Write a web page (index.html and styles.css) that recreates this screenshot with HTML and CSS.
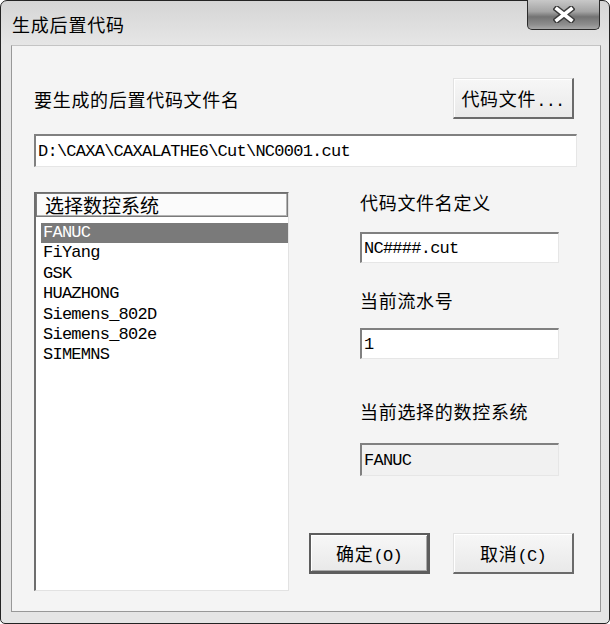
FILE: index.html
```html
<!DOCTYPE html>
<html lang="zh-CN">
<head>
<meta charset="utf-8">
<title>生成后置代码</title>
<link rel="stylesheet" href="styles.css">
</head>
<body>
<div class="window">
  <div class="titlebar">
    <span class="title">生成后置代码</span>
    <div class="close">
      <svg width="22" height="17" viewBox="0 0 22 17">
        <path d="M4 3 L18 14 M18 3 L4 14" stroke="#3c3c3c" stroke-width="6.5" stroke-linecap="square"/>
        <path d="M4 3 L18 14 M18 3 L4 14" stroke="#ffffff" stroke-width="3.6" stroke-linecap="square"/>
      </svg>
    </div>
  </div>
  <div class="client">
    <div class="row-file">
      <span class="label">要生成的后置代码文件名</span>
      <button class="btn">代码文件<span class="mono">...</span></button>
    </div>
    <div class="field path">D:\CAXA\CAXALATHE6\Cut\NC0001.cut</div>
    <div class="main">
      <div class="listbox">
        <div class="list-head">选择数控系统</div>
        <ul class="items">
          <li class="sel">FANUC</li>
          <li>FiYang</li>
          <li>GSK</li>
          <li>HUAZHONG</li>
          <li>Siemens_802D</li>
          <li>Siemens_802e</li>
          <li>SIMEMNS</li>
        </ul>
      </div>
      <div class="side">
        <div class="fields">
          <div class="label">代码文件名定义</div>
          <div class="field f1">NC####.cut</div>
          <div class="label lab2">当前流水号</div>
          <div class="field f2">1</div>
          <div class="label lab3">当前选择的数控系统</div>
          <div class="field f3 readonly">FANUC</div>
        </div>
        <div class="buttons">
          <button class="btn default">确定<span class="mono">(O)</span></button>
          <button class="btn">取消<span class="mono">(C)</span></button>
        </div>
      </div>
    </div>
  </div>
</div>
</body>
</html>
```
FILE: styles.css
```css
* { box-sizing: border-box; }

body {
  margin: 0;
  width: 610px;
  height: 624px;
  overflow: hidden;
  background: #ffffff;
  font-family: "Noto Sans CJK SC", sans-serif;
  color: #000;
}

.window {
  width: 610px;
  height: 624px;
  border: 1px solid #232323;
  border-radius: 7px 7px 5px 5px;
  background: linear-gradient(#d5d5d5 0, #e6e6e6 44px, #e5e5e5 100%);
  padding: 0 8px 11px 10px;
  display: flex;
  flex-direction: column;
}

.titlebar {
  height: 44px;
  display: flex;
  align-items: flex-start;
  flex: none;
}

.title {
  margin: 13px 0 0 1px;
  font-size: 18px;
  line-height: 20px;
  letter-spacing: 0.8px;
}

.close {
  margin: -1px 1px 0 auto;
  width: 73px;
  height: 30px;
  border: 1px solid #2b2b2b;
  border-top: none;
  border-radius: 0 0 5px 5px;
  background: linear-gradient(#c8c8c8 0, #a4a4a4 40%, #737373 58%, #8e8e8e 85%, #a8a8a8 100%);
  display: flex;
  align-items: center;
  justify-content: center;
}

.client {
  flex: 1;
  border: 1px solid #989898;
  border-top-color: #c4c4c4;
  background: #f4f4f4;
  padding: 32px 23px 0 22px;
}

.label {
  font-size: 18px;
  line-height: 20px;
  letter-spacing: 0.7px;
}

.mono {
  font-family: "Liberation Mono", monospace;
  font-size: 17px;
  letter-spacing: -0.75px;
}

.row-file {
  display: flex;
  align-items: center;
  justify-content: space-between;
  height: 41px;
  margin-right: 3px;
}

.btn {
  width: 121px;
  height: 41px;
  padding: 0;
  font-family: "Noto Sans CJK SC", sans-serif;
  font-size: 18px;
  letter-spacing: 0.7px;
  color: #000;
  background: linear-gradient(#f7f7f7, #e9e9e9);
  border-style: solid;
  border-width: 1px 2px 2px 1px;
  border-color: #e2e2e2 #6a6a6a #6a6a6a #e2e2e2;
  box-shadow: inset 1px 1px 0 #ffffff;
}

.btn.default {
  border-width: 2px 3px 3px 2px;
  border-color: #5d5d5d;
  box-shadow: inset 1px 1px 0 #ffffff, inset -1px -1px 0 #a9a9a9;
}

.field {
  border-style: solid;
  border-width: 2px 1px 1px 2px;
  border-color: #808080 #e6e6e6 #e6e6e6 #808080;
  background: #ffffff;
  font-family: "Liberation Mono", monospace;
  font-size: 17px;
  letter-spacing: -0.75px;
  padding-left: 2px;
  display: flex;
  align-items: center;
  white-space: nowrap;
}

.path {
  margin-top: 15px;
  height: 33px;
}

.main {
  margin-top: 25px;
  height: 399px;
  display: grid;
  grid-template-columns: 255px 268px;
  column-gap: 20px;
}

.listbox {
  border-style: solid;
  border-width: 1px 1px 1px 2px;
  border-color: #6e6e6e #e2e2e2 #e2e2e2 #6e6e6e;
  background: #ffffff;
}

.list-head {
  height: 24px;
  border: 1px solid #7a7a7a;
  box-shadow: inset -1px -1px 0 #b3b3b3;
  background: #fbfbfb;
  padding-left: 8px;
  font-size: 19px;
  line-height: 22px;
}

.items {
  list-style: none;
  margin: 6px 0 0 5px;
  padding: 0;
}

.items li {
  height: 20.4px;
  line-height: 20.4px;
  padding-left: 2px;
  font-family: "Liberation Mono", monospace;
  font-size: 17px;
  letter-spacing: -0.75px;
}

.items li.sel {
  background: #7a7a7a;
  color: #ffffff;
}

.side {
  display: flex;
  flex-direction: column;
}

.fields {
  padding-left: 51px;
  width: 250px;
}

.f1 { margin-top: 20px; height: 31px; }
.lab2 { margin-top: 27px; }
.f2 { margin-top: 18px; height: 31px; }
.lab3 { margin-top: 42px; }
.f3 { margin-top: 22px; height: 33px; }
.readonly { background: #f1f1f1; }

.buttons {
  margin-top: 57px;
  display: flex;
  gap: 23px;
}
```
